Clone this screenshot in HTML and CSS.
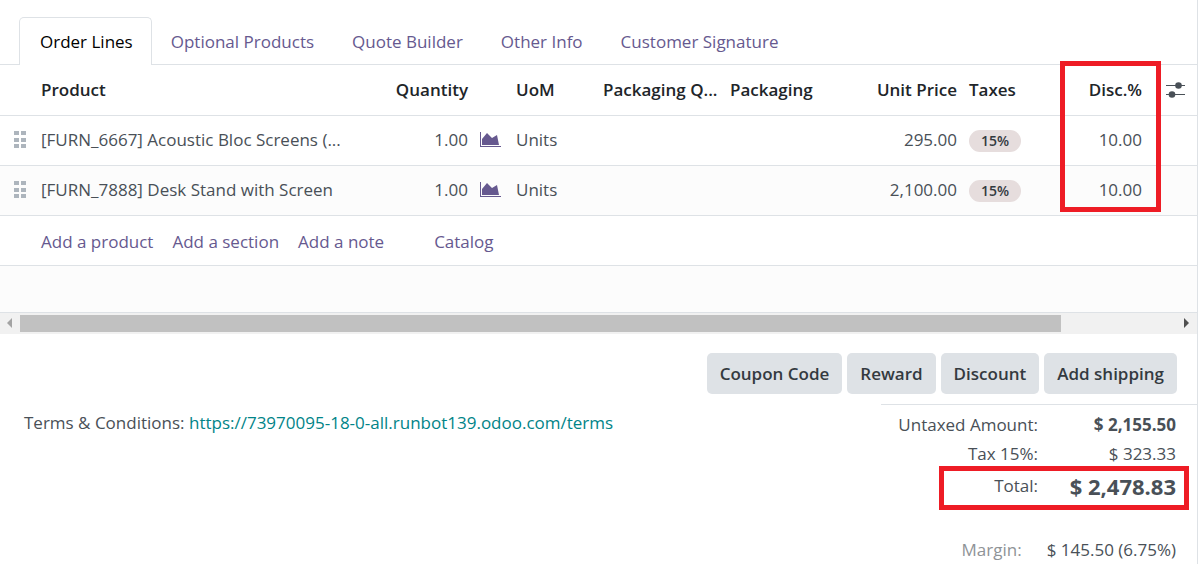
FILE: index.html
```html
<!DOCTYPE html>
<html lang="en">
<head>
    <meta charset="UTF-8">
    <meta name="viewport" content="width=device-width, initial-scale=1.0">
    <title>Quotation</title>
    <link rel="stylesheet" href="styles.css">
</head>
<body>
    <svg class="sprite" aria-hidden="true">
        <symbol id="chart" viewBox="0 0 21 16">
            <path d="M0 0h1v14h20v1H0z"/>
            <path d="M2 13V7l5-6 5 5 5-3 2 10z"/>
        </symbol>
        <symbol id="grip" viewBox="0 0 12 18">
            <path d="M0 0h5v4H0zM7 0h5v4H7zM0 7h5v4H0zM7 7h5v4H7zM0 13h5v4H0zM7 13h5v4H7z"/>
        </symbol>
    </svg>

    <div class="sheet">
        <nav class="tabs">
            <a href="#" class="tab active">Order Lines</a>
            <a href="#" class="tab">Optional Products</a>
            <a href="#" class="tab">Quote Builder</a>
            <a href="#" class="tab">Other Info</a>
            <a href="#" class="tab">Customer Signature</a>
        </nav>

        <div class="list">
            <table class="lines">
                <colgroup>
                    <col class="col-handle">
                    <col class="col-product">
                    <col class="col-qty">
                    <col class="col-chart">
                    <col class="col-uom">
                    <col class="col-pack-qty">
                    <col class="col-pack">
                    <col class="col-price">
                    <col class="col-taxes">
                    <col class="col-disc">
                    <col class="col-options">
                </colgroup>
                <thead>
                    <tr>
                        <th></th>
                        <th>Product</th>
                        <th class="num">Quantity</th>
                        <th></th>
                        <th>UoM</th>
                        <th>Packaging Q...</th>
                        <th>Packaging</th>
                        <th class="num">Unit Price</th>
                        <th>Taxes</th>
                        <th class="num">Disc.%</th>
                        <th class="options">
                            <button type="button" class="icon-btn" aria-label="Optional columns">
                                <svg width="19" height="18" viewBox="0 0 19 18">
                                    <path d="M0 4.5h19M0 13.5h19" stroke="currentColor" stroke-width="1.2"/>
                                    <circle cx="12.5" cy="4.5" r="3.3"/>
                                    <circle cx="6" cy="13.5" r="3.3"/>
                                </svg>
                            </button>
                        </th>
                    </tr>
                </thead>
                <tbody>
                    <tr>
                        <td class="handle"><svg width="12" height="18"><use href="#grip"/></svg></td>
                        <td>[FURN_6667] Acoustic Bloc Screens (...</td>
                        <td class="num">1.00</td>
                        <td><button type="button" class="icon-btn chart" aria-label="Forecast"><svg width="21" height="16"><use href="#chart"/></svg></button></td>
                        <td>Units</td>
                        <td></td>
                        <td></td>
                        <td class="num">295.00</td>
                        <td><span class="tag">15%</span></td>
                        <td class="num">10.00</td>
                        <td></td>
                    </tr>
                    <tr class="striped">
                        <td class="handle"><svg width="12" height="18"><use href="#grip"/></svg></td>
                        <td>[FURN_7888] Desk Stand with Screen</td>
                        <td class="num">1.00</td>
                        <td><button type="button" class="icon-btn chart" aria-label="Forecast"><svg width="21" height="16"><use href="#chart"/></svg></button></td>
                        <td>Units</td>
                        <td></td>
                        <td></td>
                        <td class="num">2,100.00</td>
                        <td><span class="tag">15%</span></td>
                        <td class="num">10.00</td>
                        <td></td>
                    </tr>
                    <tr>
                        <td></td>
                        <td colspan="10">
                            <div class="add-links">
                                <a href="#">Add a product</a>
                                <a href="#">Add a section</a>
                                <a href="#">Add a note</a>
                                <a href="#" class="catalog">Catalog</a>
                            </div>
                        </td>
                    </tr>
                    <tr class="striped blank">
                        <td colspan="11"></td>
                    </tr>
                </tbody>
            </table>
            <div class="highlight highlight-disc"></div>
        </div>

        <div class="scrollbar">
            <svg class="arrow-left" width="20" height="20" viewBox="0 0 20 20"><path d="M12 5v10l-5-5z"/></svg>
            <div class="track"><div class="thumb"></div></div>
            <svg class="arrow-right" width="20" height="20" viewBox="0 0 20 20"><path d="M7 5v10l5-5z"/></svg>
        </div>

        <div class="actions">
            <button type="button">Coupon Code</button>
            <button type="button">Reward</button>
            <button type="button">Discount</button>
            <button type="button">Add shipping</button>
        </div>

        <div class="footer">
            <p class="terms">Terms &amp; Conditions: <a href="#">https://73970095-18-0-all.runbot139.odoo.com/terms</a></p>
            <div class="totals">
                <table>
                    <tr>
                        <th>Untaxed Amount:</th>
                        <td class="strong">$ 2,155.50</td>
                    </tr>
                    <tr>
                        <th>Tax 15%:</th>
                        <td>$ 323.33</td>
                    </tr>
                    <tr class="total">
                        <th>Total:</th>
                        <td>$ 2,478.83</td>
                    </tr>
                </table>
                <div class="highlight highlight-total"></div>
                <div class="margin-row">
                    <span class="muted">Margin:</span>
                    <span>$ 145.50 (6.75%)</span>
                </div>
            </div>
        </div>
    </div>
</body>
</html>
```
FILE: styles.css
```css
* {
    box-sizing: border-box;
}

body {
    font-family: "Open Sans", "Noto Sans", sans-serif;
    font-size: 17px;
    line-height: 24px;
    margin: 0;
    background-color: #fff;
    color: #495057;
}

a {
    color: #66598f;
    text-decoration: none;
}

button {
    font: inherit;
    cursor: pointer;
}

.sprite {
    display: none;
}

.sheet {
    min-height: 100vh;
    margin-right: 1px;
    border-right: 1px solid #dee2e6;
}

/* Tabs */
.tabs {
    display: flex;
    padding: 17px 19px 0;
    border-bottom: 1px solid #dee2e6;
}

.tab {
    padding: 12px 18px 10px;
    border: 1px solid transparent;
    border-bottom: 0;
    white-space: nowrap;
}

.tab.active {
    margin-bottom: -1px;
    padding-bottom: 11px;
    padding-left: 20px;
    border-color: #dee2e6;
    border-radius: 5px 5px 0 0;
    background-color: #fff;
    color: #000;
}

/* Order lines */
.list {
    position: relative;
}

.lines {
    width: 100%;
    table-layout: fixed;
    border-collapse: collapse;
}

.col-handle { width: 35px; }
.col-qty { width: 104px; }
.col-chart { width: 36px; }
.col-uom { width: 87px; }
.col-pack-qty { width: 127px; }
.col-pack { width: 126px; }
.col-price { width: 113px; }
.col-taxes { width: 97px; }
.col-disc { width: 88px; }
.col-options { width: 49px; }

.lines th,
.lines td {
    height: 50px;
    padding: 0 6px;
    border-bottom: 1px solid #dee2e6;
    text-align: left;
    white-space: nowrap;
    overflow: hidden;
    text-overflow: ellipsis;
}

.lines th {
    color: #212529;
    font-weight: 600;
}

.lines .num {
    text-align: right;
}

.lines .options {
    padding-left: 18px;
}

.lines .handle {
    padding-left: 14px;
}

.handle svg {
    display: block;
    fill: #adb5bd;
}

.striped {
    background-color: #fcfcfc;
}

.lines .blank td {
    height: 47px;
}

.icon-btn {
    display: block;
    padding: 0;
    border: 0;
    background: none;
    color: #495057;
    fill: currentColor;
}

.icon-btn svg {
    display: block;
}

.chart {
    color: #66598f;
}

.tag {
    display: inline-block;
    padding: 0 12px;
    border-radius: 11px;
    background-color: #e6dddd;
    color: #343a40;
    font-size: 14px;
    font-weight: 600;
    line-height: 22px;
    vertical-align: middle;
}

.add-links {
    display: flex;
    gap: 19px;
    padding-top: 3px;
}

.catalog {
    margin-left: 31px;
}

.highlight {
    position: absolute;
    border: 5px solid #ee1c25;
    pointer-events: none;
}

.highlight-disc {
    top: -4px;
    right: 36px;
    width: 101px;
    height: 151px;
}

/* Horizontal scrollbar */
.scrollbar {
    display: flex;
    align-items: center;
    height: 21px;
    background-color: #f1f1f1;
}

.track {
    flex: 1;
}

.thumb {
    width: 90%;
    height: 17px;
    background-color: #c1c1c1;
}

.arrow-left {
    fill: #a3a3a3;
}

.arrow-right {
    fill: #505050;
}

/* Buttons */
.actions {
    display: flex;
    justify-content: flex-end;
    gap: 5px;
    padding: 19px 20px 10px;
}

.actions button {
    padding: 8px 13px;
    border: 0;
    border-radius: 5px;
    background-color: #dee2e6;
    color: #343a40;
    font-weight: 600;
    line-height: 25px;
    white-space: nowrap;
}

/* Terms and totals */
.footer {
    display: flex;
    justify-content: space-between;
    align-items: flex-start;
}

.terms {
    margin: 7px 0 0 24px;
}

.terms a {
    color: #018488;
}

.totals {
    position: relative;
    width: 316px;
    padding: 6px 21px 0 0;
    border-top: 1px solid #dee2e6;
}

.totals table {
    width: 100%;
    border-collapse: collapse;
}

.totals th,
.totals td {
    height: 29px;
    padding: 0;
    font-weight: 400;
    text-align: right;
    white-space: nowrap;
}

.totals td {
    width: 138px;
}

.totals .strong {
    font-weight: 700;
}

.totals .total th,
.totals .total td {
    height: 34px;
}

.totals .total td {
    font-size: 22px;
    font-weight: 700;
}

.highlight-total {
    top: 61px;
    right: 8px;
    width: 250px;
    height: 44px;
}

.margin-row {
    display: flex;
    justify-content: flex-end;
    gap: 25px;
    padding-top: 35px;
}

.muted {
    color: #8f9397;
}
```
